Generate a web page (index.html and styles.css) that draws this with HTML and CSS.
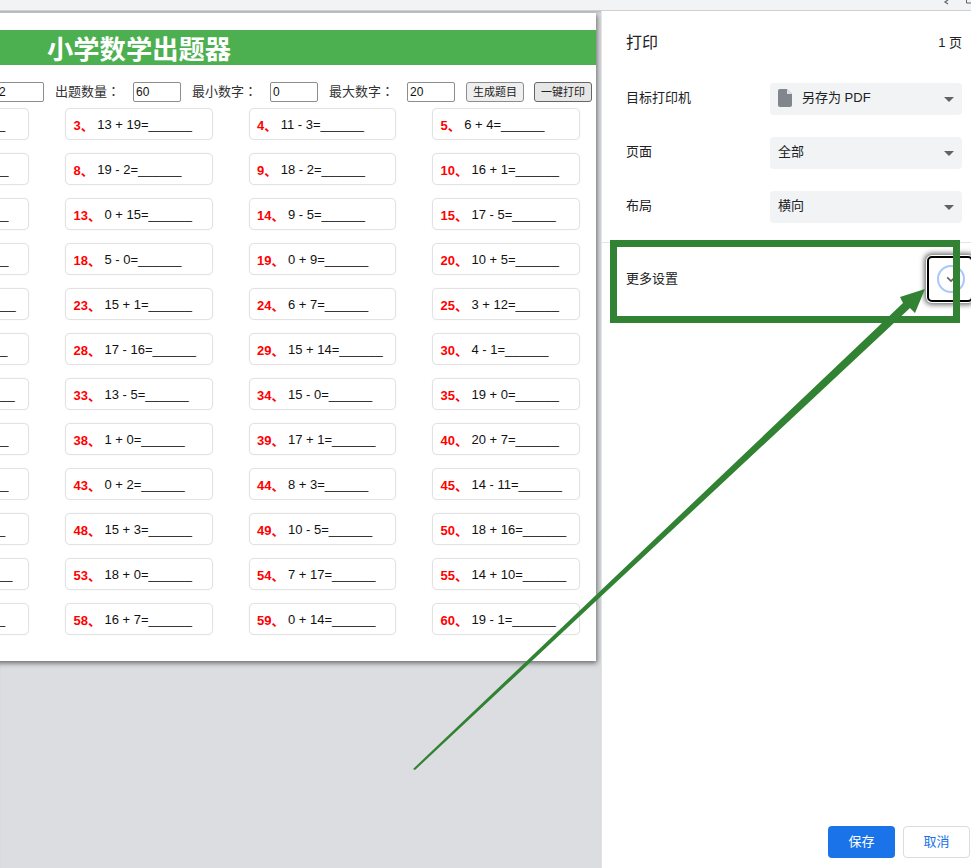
FILE: index.html
```html
<!DOCTYPE html>
<html lang="zh-CN">
<head>
    <meta charset="UTF-8">
    <title>打印</title>
    <link rel="stylesheet" href="styles.css">
</head>
<body>
    <div class="topbar">
        <svg class="top-icons" width="40" height="10" viewBox="0 0 40 10"><path d="M17 0 L14 2 L17 4" fill="none" stroke="#5f6368" stroke-width="1.2"/><path d="M35.5 0 V3 H40" fill="none" stroke="#5f6368" stroke-width="1"/></svg>
    </div>
    <div class="main">
        <div class="preview">
            <div class="paper">
                <div class="banner"><h1>小学数学出题器</h1></div>
                <div class="toolbar">
                    <input class="num" type="text" value="2">
                    <span class="tool-label" lang="zh-TW">出题数量：</span>
                    <input class="num" type="text" value="60">
                    <span class="tool-label" lang="zh-TW">最小数字：</span>
                    <input class="num" type="text" value="0">
                    <span class="tool-label" lang="zh-TW">最大数字：</span>
                    <input class="num" type="text" value="20">
                    <button class="tool-btn">生成题目</button>
                    <button class="tool-btn dark">一键打印</button>
                </div>
                <div class="grid">
                    <div class="card"><b>2、</b>19 - 12=______</div>
                    <div class="card"><b>3、</b>13 + 19=______</div>
                    <div class="card"><b>4、</b>11 - 3=______</div>
                    <div class="card"><b>5、</b>6 + 4=______</div>
                    <div class="card"><b>7、</b>13 + 19=______</div>
                    <div class="card"><b>8、</b>19 - 2=______</div>
                    <div class="card"><b>9、</b>18 - 2=______</div>
                    <div class="card"><b>10、</b>16 + 1=______</div>
                    <div class="card"><b>12、</b>3 + 19=______</div>
                    <div class="card"><b>13、</b>0 + 15=______</div>
                    <div class="card"><b>14、</b>9 - 5=______</div>
                    <div class="card"><b>15、</b>17 - 5=______</div>
                    <div class="card"><b>17、</b>4 + 12=______</div>
                    <div class="card"><b>18、</b>5 - 0=______</div>
                    <div class="card"><b>19、</b>0 + 9=______</div>
                    <div class="card"><b>20、</b>10 + 5=______</div>
                    <div class="card"><b>22、</b>14 + 12=______</div>
                    <div class="card"><b>23、</b>15 + 1=______</div>
                    <div class="card"><b>24、</b>6 + 7=______</div>
                    <div class="card"><b>25、</b>3 + 12=______</div>
                    <div class="card"><b>27、</b>5 + 11=______</div>
                    <div class="card"><b>28、</b>17 - 16=______</div>
                    <div class="card"><b>29、</b>15 + 14=______</div>
                    <div class="card"><b>30、</b>4 - 1=______</div>
                    <div class="card"><b>32、</b>15 + 11=______</div>
                    <div class="card"><b>33、</b>13 - 5=______</div>
                    <div class="card"><b>34、</b>15 - 0=______</div>
                    <div class="card"><b>35、</b>19 + 0=______</div>
                    <div class="card"><b>37、</b>8 + 10=______</div>
                    <div class="card"><b>38、</b>1 + 0=______</div>
                    <div class="card"><b>39、</b>17 + 1=______</div>
                    <div class="card"><b>40、</b>20 + 7=______</div>
                    <div class="card"><b>42、</b>9 + 10=______</div>
                    <div class="card"><b>43、</b>0 + 2=______</div>
                    <div class="card"><b>44、</b>8 + 3=______</div>
                    <div class="card"><b>45、</b>14 - 11=______</div>
                    <div class="card"><b>47、</b>12 - 3=______</div>
                    <div class="card"><b>48、</b>15 + 3=______</div>
                    <div class="card"><b>49、</b>10 - 5=______</div>
                    <div class="card"><b>50、</b>18 + 16=______</div>
                    <div class="card"><b>52、</b>15 - 10=______</div>
                    <div class="card"><b>53、</b>18 + 0=______</div>
                    <div class="card"><b>54、</b>7 + 17=______</div>
                    <div class="card"><b>55、</b>14 + 10=______</div>
                    <div class="card"><b>57、</b>16 - 7=______</div>
                    <div class="card"><b>58、</b>16 + 7=______</div>
                    <div class="card"><b>59、</b>0 + 14=______</div>
                    <div class="card"><b>60、</b>19 - 1=______</div>
                </div>
            </div>
        </div>
        <div class="panel">
            <div class="panel-head">
                <span class="panel-title">打印</span>
                <span class="page-count">1 页</span>
            </div>
            <div class="row">
                <span class="row-label">目标打印机</span>
                <div class="select">
                    <svg class="doc-icon" width="14" height="18" viewBox="0 0 14 18"><path d="M2 0 H9 L14 5 V16 Q14 18 12 18 H2 Q0 18 0 16 V2 Q0 0 2 0 Z" fill="#80868b"/><path d="M9 0 V5 H14 Z" fill="#dfe1e5"/></svg>
                    <span>另存为 PDF</span>
                    <i class="caret"></i>
                </div>
            </div>
            <div class="row">
                <span class="row-label">页面</span>
                <div class="select"><span>全部</span><i class="caret"></i></div>
            </div>
            <div class="row">
                <span class="row-label">布局</span>
                <div class="select"><span>横向</span><i class="caret"></i></div>
            </div>
            <div class="more">
                <span class="more-label">更多设置</span>
                <div class="more-btn">
                    <div class="ring">
                        <svg width="10" height="7" viewBox="0 0 12 8"><path d="M1.5 1.5 L6 6 L10.5 1.5" fill="none" stroke="#5f6368" stroke-width="2"/></svg>
                    </div>
                </div>
            </div>
            <div class="actions">
                <button class="save">保存</button>
                <button class="cancel">取消</button>
            </div>
        </div>
    </div>
    <svg class="notes" width="971" height="868" viewBox="0 0 971 868">
        <rect x="613.5" y="243.5" width="343" height="76" fill="none" stroke="#318233" stroke-width="7"/>
        <polygon points="413,769 903,303 900,297 925,289 915,313 910,308 415,770" fill="#318233"/>
    </svg>
</body>
</html>
```

FILE: styles.css
```css
* {
  box-sizing: border-box;
}

body {
  margin: 0;
  width: 971px;
  height: 868px;
  overflow: hidden;
  position: relative;
  font-family: "Liberation Sans", "Noto Sans CJK SC", sans-serif;
  color: #202124;
  background: #fff;
}

.topbar {
  height: 11px;
  background: #f1f3f4;
  border-bottom: 1px solid #cfd0d2;
  position: relative;
}

.top-icons {
  position: absolute;
  right: 0;
  top: 0;
}

.main {
  display: flex;
  height: 857px;
}

.preview {
  width: 601px;
  flex: none;
  background: #dcdde0;
  overflow: hidden;
  box-shadow: inset 0 2px 2px -1px #b5b6b9;
}

.paper {
  width: 714px;
  height: 648px;
  margin: 2px 0 0 -118px;
  padding-top: 17px;
  background: #fff;
  box-shadow: 1px 2px 5px rgba(60, 60, 60, 0.75);
}

.banner {
  height: 35px;
  padding-left: 165px;
  background: #4caf50;
  display: flex;
  align-items: center;
}

.banner h1 {
  margin: 0;
  font-size: 26.3px;
  font-weight: bold;
  color: #fff;
}

.toolbar {
  height: 20px;
  margin-top: 17px;
  padding-right: 4px;
  display: flex;
  justify-content: flex-end;
  align-items: center;
  overflow: hidden;
}

.tool-label {
  font-family: "Liberation Sans", "Noto Sans CJK TC", sans-serif;
  font-size: 13px;
  color: #333;
  margin-left: 11px;
  padding-bottom: 4px;
  width: 78px;
  flex: none;
  white-space: nowrap;
}

.num {
  width: 48px;
  height: 20px;
  flex: none;
  padding: 0 2px;
  font: 12px "Liberation Sans", sans-serif;
  color: #111;
  border: 1px solid #8d8d8d;
  border-radius: 2px;
}

.tool-btn {
  width: 58px;
  height: 20px;
  margin-left: 11px;
  padding: 0 0 2px;
  flex: none;
  font: 11px "Liberation Sans", "Noto Sans CJK SC", sans-serif;
  color: #222;
  background: #efefef;
  border: 1px solid #8d8d8d;
  border-radius: 3px;
}

.tool-btn.dark {
  margin-left: 10px;
  background: #e6e6e6;
  border-color: #666;
}

.grid {
  margin: 6px 0 0 -0.5px;
  display: grid;
  grid-template-columns: repeat(4, 147.5px);
  grid-auto-rows: 32px;
  column-gap: 36px;
  row-gap: 13px;
}

.card {
  border: 1px solid #e2e2e2;
  border-radius: 5px;
  padding-left: 7.5px;
  display: flex;
  align-items: center;
  font-size: 13px;
  color: #111;
  white-space: nowrap;
  box-shadow: 0 0 1px #ddd;
}

.card b {
  color: #f00;
  font-size: 13px;
  margin-right: 3.5px;
}

.panel {
  flex: 1;
  display: flex;
  flex-direction: column;
  overflow: hidden;
  border-left: 1px solid #e4e4e6;
}

.panel-head {
  height: 60px;
  padding: 0 9px 0 24px;
  display: flex;
  justify-content: space-between;
  align-items: center;
}

.panel-title {
  font-size: 16px;
}

.page-count {
  font-size: 13px;
}

.row {
  height: 32px;
  margin: 12px 9px 10px 24px;
  display: flex;
  align-items: center;
  justify-content: space-between;
}

.row-label {
  font-size: 13px;
  padding-bottom: 6px;
}

.select {
  width: 192px;
  height: 32px;
  padding: 0 8px;
  display: flex;
  align-items: center;
  gap: 10px;
  position: relative;
  font-size: 13px;
  background: #f1f3f4;
  border-radius: 4px;
}

.select span {
  padding-bottom: 6px;
}

.doc-icon {
  margin-bottom: 2px;
}

.caret {
  position: absolute;
  right: 8px;
  top: 14px;
  border-left: 5px solid transparent;
  border-right: 5px solid transparent;
  border-top: 5px solid #5f6368;
}

.more {
  height: 73px;
  margin-top: 9px;
  padding-left: 24px;
  border-top: 1px solid #e4e4e6;
  display: flex;
  align-items: center;
  justify-content: space-between;
}

.more-label {
  font-size: 13px;
  padding-bottom: 4px;
}

.more-btn {
  width: 46px;
  height: 46px;
  margin-right: -2px;
  padding-left: 8px;
  display: flex;
  align-items: center;
  border: 2px solid #000;
  border-radius: 5px;
  box-shadow: 0 0 0 1px #fff, 0 0 5px 3px #777;
}

.ring {
  width: 28px;
  height: 28px;
  border: 2px solid #a8c7fa;
  border-radius: 50%;
  display: flex;
  align-items: center;
  justify-content: center;
}

.actions {
  margin-top: auto;
  padding: 0 1px 10px 0;
  display: flex;
  justify-content: flex-end;
  gap: 8px;
}

.actions button {
  width: 67px;
  height: 32px;
  padding: 0 0 4px;
  font: 13px "Liberation Sans", "Noto Sans CJK SC", sans-serif;
  border-radius: 4px;
}

.save {
  color: #fff;
  background: #1a73e8;
  border: none;
}

.cancel {
  color: #1a73e8;
  background: #fff;
  border: 1px solid #dadce0;
}

.notes {
  position: absolute;
  left: 0;
  top: 0;
  pointer-events: none;
}
```
